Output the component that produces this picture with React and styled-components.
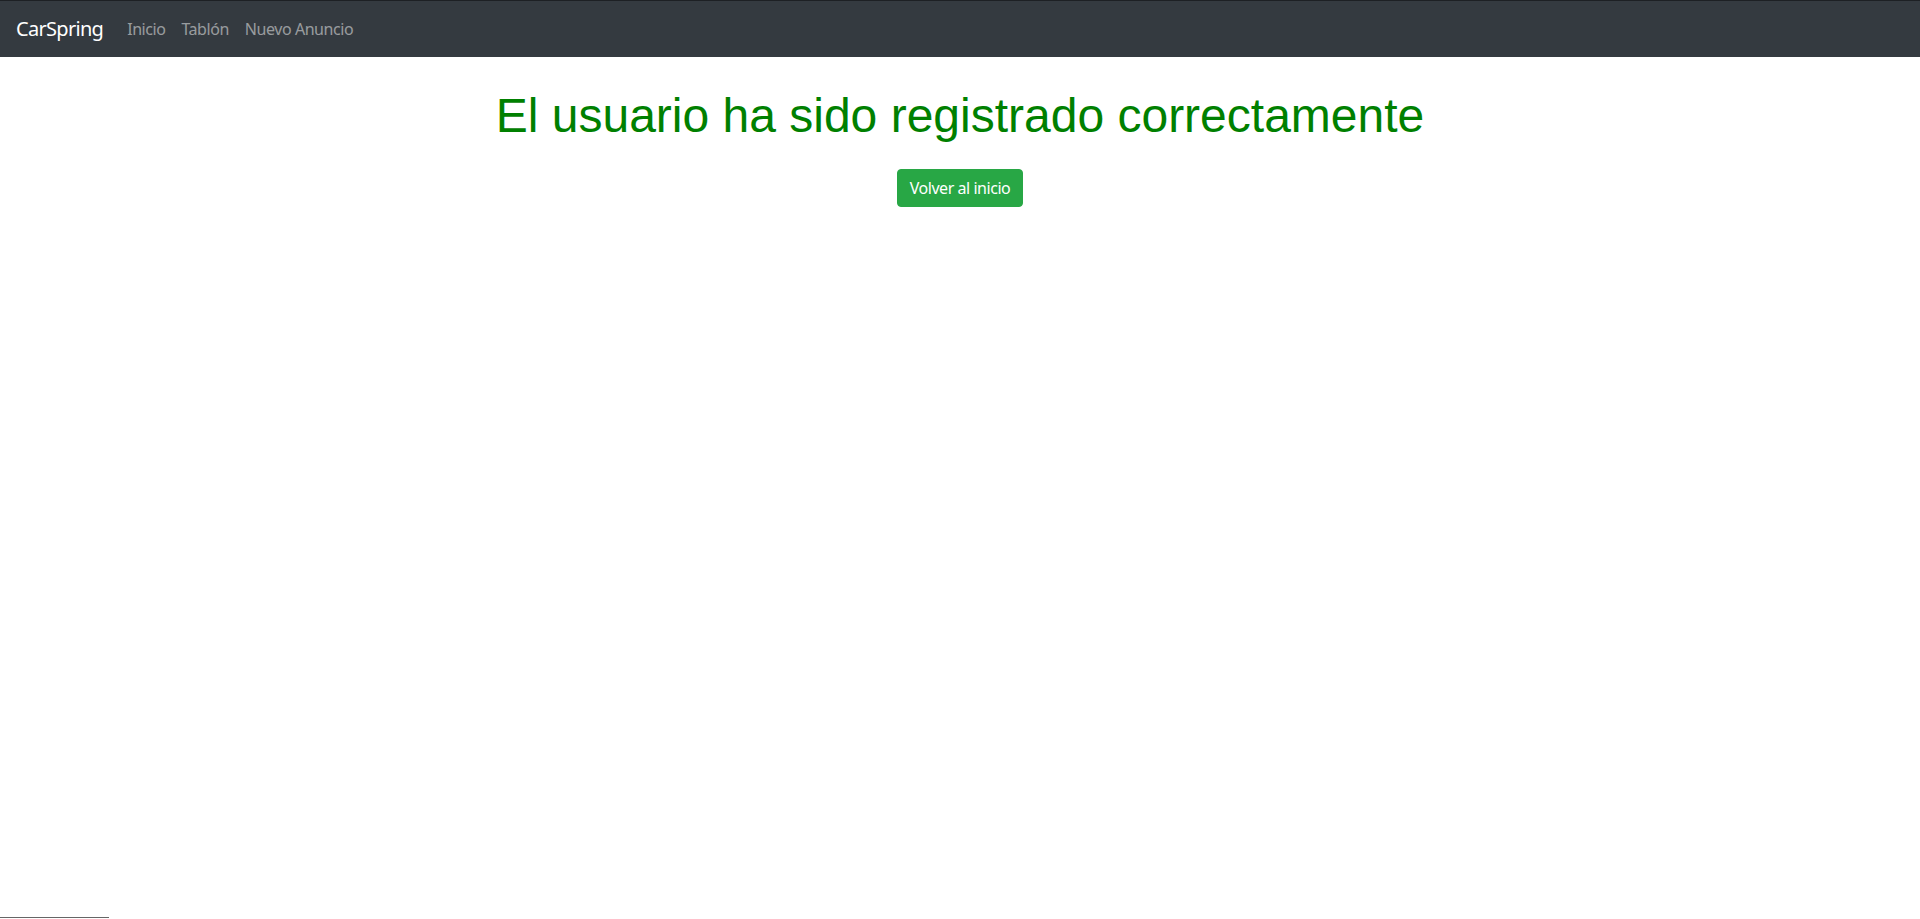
import React from "react";
import styled, { createGlobalStyle } from "styled-components";

const GlobalStyle = createGlobalStyle`
  html, body { margin: 0; padding: 0; background: #fff; }
  body {
    font-family: "Segoe UI", "Noto Sans", "Open Sans", sans-serif;
    font-size: 16px;
    line-height: 1.5;
    color: #212529;
  }
  * { box-sizing: border-box; }
`;

const Page = styled.div`
  display: flex;
  flex-direction: column;
  min-height: 100vh;
`;

const Navbar = styled.nav`
  display: flex;
  align-items: center;
  height: 57px;
  padding: 0 16px;
  background: #343a40;
  border-top: 1px solid #1d2024;
`;

const Brand = styled.a`
  font-size: 20px;
  line-height: 30px;
  letter-spacing: -0.7px;
  color: #fff;
  margin-right: 16px;
  text-decoration: none;
  white-space: nowrap;
`;

const NavList = styled.div`
  display: flex;
  align-items: center;
`;

const NavLink = styled.a`
  padding: 8px;
  color: rgba(255, 255, 255, 0.5);
  text-decoration: none;
  font-size: 16px;
  line-height: 24px;
  letter-spacing: -0.45px;
`;

const Main = styled.main`
  flex: 1;
  display: flex;
  flex-direction: column;
  align-items: center;
  padding-top: 30px;
`;

const Title = styled.h1`
  margin: 0 0 24px;
  font-family: "Liberation Sans", Arial, sans-serif;
  font-weight: 400;
  font-size: 48px;
  line-height: 1.2;
  color: green;
  text-align: center;
`;

const Button = styled.a`
  display: inline-block;
  padding: 6px 12px;
  font-size: 16px;
  line-height: 24px;
  letter-spacing: -0.45px;
  color: #fff;
  background: #28a745;
  border: 1px solid #28a745;
  border-radius: 4px;
  text-decoration: none;
  cursor: pointer;
`;

const Footer = styled.footer`
  display: flex;
  height: 2px;
`;

const FooterRule = styled.div`
  width: 109px;
  height: 1px;
  background: #666;
`;

export default function App() {
  return (
    <>
      <GlobalStyle />
      <Page>
        <Navbar>
          <Brand href="#">CarSpring</Brand>
          <NavList>
            <NavLink href="#">Inicio</NavLink>
            <NavLink href="#">Tablón</NavLink>
            <NavLink href="#">Nuevo Anuncio</NavLink>
          </NavList>
        </Navbar>
        <Main>
          <Title>El usuario ha sido registrado correctamente</Title>
          <Button href="#">Volver al inicio</Button>
        </Main>
        <Footer>
          <FooterRule />
        </Footer>
      </Page>
    </>
  );
}
